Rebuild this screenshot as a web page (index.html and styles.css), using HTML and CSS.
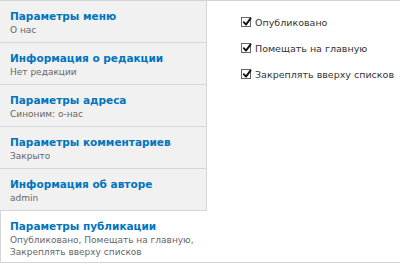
FILE: index.html
```html
<!DOCTYPE html>
<html lang="ru">
<head>
<meta charset="utf-8">
<title>Vertical tabs</title>
<link rel="stylesheet" href="styles.css">
</head>
<body>
<div class="vt">
  <ul class="tabs">
    <li class="tab"><a class="tab-link"><strong class="title">Параметры меню</strong><span class="summary">О нас</span></a></li>
    <li class="tab"><a class="tab-link"><strong class="title">Информация о редакции</strong><span class="summary">Нет редакции</span></a></li>
    <li class="tab"><a class="tab-link"><strong class="title">Параметры адреса</strong><span class="summary">Синоним: о-нас</span></a></li>
    <li class="tab"><a class="tab-link"><strong class="title">Параметры комментариев</strong><span class="summary">Закрыто</span></a></li>
    <li class="tab"><a class="tab-link"><strong class="title">Информация об авторе</strong><span class="summary">admin</span></a></li>
    <li class="tab active"><a class="tab-link"><strong class="title">Параметры публикации</strong><span class="summary">Опубликовано, Помещать на главную,<br>Закреплять вверху списков</span></a></li>
  </ul>
  <div class="pane">
    <label class="opt"><span class="box"><svg class="check" viewBox="0 0 10 10" width="10" height="10"><path d="M1.8 5.2 L4 7.6 L8.6 1.4" fill="none" stroke="#111" stroke-width="1.9" stroke-linecap="round" stroke-linejoin="round"/></svg></span>Опубликовано</label>
    <label class="opt"><span class="box"><svg class="check" viewBox="0 0 10 10" width="10" height="10"><path d="M1.8 5.2 L4 7.6 L8.6 1.4" fill="none" stroke="#111" stroke-width="1.9" stroke-linecap="round" stroke-linejoin="round"/></svg></span>Помещать на главную</label>
    <label class="opt"><span class="box"><svg class="check" viewBox="0 0 10 10" width="10" height="10"><path d="M1.8 5.2 L4 7.6 L8.6 1.4" fill="none" stroke="#111" stroke-width="1.9" stroke-linecap="round" stroke-linejoin="round"/></svg></span>Закреплять вверху списков</label>
  </div>
</div>
</body>
</html>
```
FILE: styles.css
```css
html, body {
  margin: 0;
  padding: 0;
  background: #fff;
}
body {
  font-family: "DejaVu Sans", Verdana, sans-serif;
  color: #333;
}
.vt {
  display: flex;
  box-sizing: border-box;
  height: 263px;
  border-top: 1px solid #d4d4d4;
  border-bottom: 1px solid #d4d4d4;
}
.tabs {
  list-style: none;
  margin: 0;
  padding: 0;
  width: 207px;
  flex: none;
  display: flex;
  flex-direction: column;
}
.tab {
  box-sizing: border-box;
  height: 42px;
  background: #f1f1f1;
  border-bottom: 1px solid #d6d6d6;
  border-right: 1px solid #d6d6d6;
}
.tab-link {
  display: flex;
  flex-direction: column;
  padding: 8px 10px 0;
}
.title {
  font-size: 10.5px;
  line-height: 15px;
  font-weight: bold;
  color: #0074bd;
}
.summary {
  font-size: 9px;
  line-height: 12px;
  color: #666;
}
.tab.active {
  flex: 1;
  background: #fff;
  border-bottom: none;
  border-right: none;
  border-left: 1px solid #d6d6d6;
}
.tab.active .tab-link {
  padding-left: 9px;
}
.pane {
  flex: 1;
  display: flex;
  flex-direction: column;
  gap: 10px;
  padding: 13px 0 0 34px;
}
.opt {
  display: flex;
  align-items: center;
  height: 16px;
  font-size: 9.5px;
  color: #333;
  white-space: nowrap;
}
.box {
  position: relative;
  box-sizing: border-box;
  width: 10px;
  height: 10px;
  border: 1px solid #666;
  background: #fff;
  margin-right: 4px;
  flex: none;
}
.check {
  position: absolute;
  left: 0;
  top: -1px;
}
```
